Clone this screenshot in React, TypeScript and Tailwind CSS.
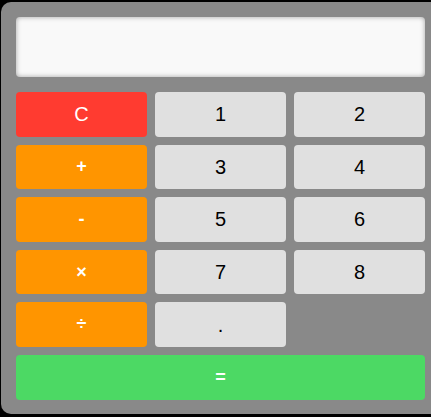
import React from 'react'

type Key = { label: string; kind: 'clear' | 'op' | 'num' | 'eq' | 'blank' }

const keys: Key[] = [
  { label: 'C', kind: 'clear' },
  { label: '1', kind: 'num' },
  { label: '2', kind: 'num' },
  { label: '+', kind: 'op' },
  { label: '3', kind: 'num' },
  { label: '4', kind: 'num' },
  { label: '-', kind: 'op' },
  { label: '5', kind: 'num' },
  { label: '6', kind: 'num' },
  { label: '×', kind: 'op' },
  { label: '7', kind: 'num' },
  { label: '8', kind: 'num' },
  { label: '÷', kind: 'op' },
  { label: '.', kind: 'num' },
  { label: '', kind: 'blank' },
]

const styles = {
  clear: 'bg-[#ff3b30] text-white text-[20px]',
  op: 'bg-[#ff9500] text-white text-[18px] font-bold',
  num: 'bg-[#e0e0e0] text-black text-[20px]',
  eq: 'bg-[#4cd964] text-white text-[18px] font-bold',
  blank: '',
}

export default function App() {
  return (
    <div className="w-[431px] h-[417px] bg-black overflow-hidden font-['Liberation_Sans',Arial,sans-serif]">
      <div className="ml-[1px] mt-[2px] w-[440px] h-[412px] rounded-[10px] bg-[#898989] pl-[15px] pt-[15px]">
        <div className="w-[409px]">
          {/* Display */}
          <div className="h-[60px] rounded-[4px] bg-[#f9f9f9] shadow-[inset_0_0_5px_rgba(0,0,0,0.35)]" />

          {/* Keypad */}
          <div className="mt-[15px] grid grid-cols-3 gap-x-2 gap-y-[8px] auto-rows-[44.6px]">
            {keys.map((k, i) =>
              k.kind === 'blank' ? (
                <div key={i} />
              ) : (
                <button
                  key={i}
                  className={`rounded-[4px] flex items-center justify-center ${styles[k.kind]}`}
                >
                  {k.label}
                </button>
              )
            )}
            <button className={`col-span-3 rounded-[4px] flex items-center justify-center ${styles.eq}`}>
              =
            </button>
          </div>
        </div>
      </div>
    </div>
  )
}
